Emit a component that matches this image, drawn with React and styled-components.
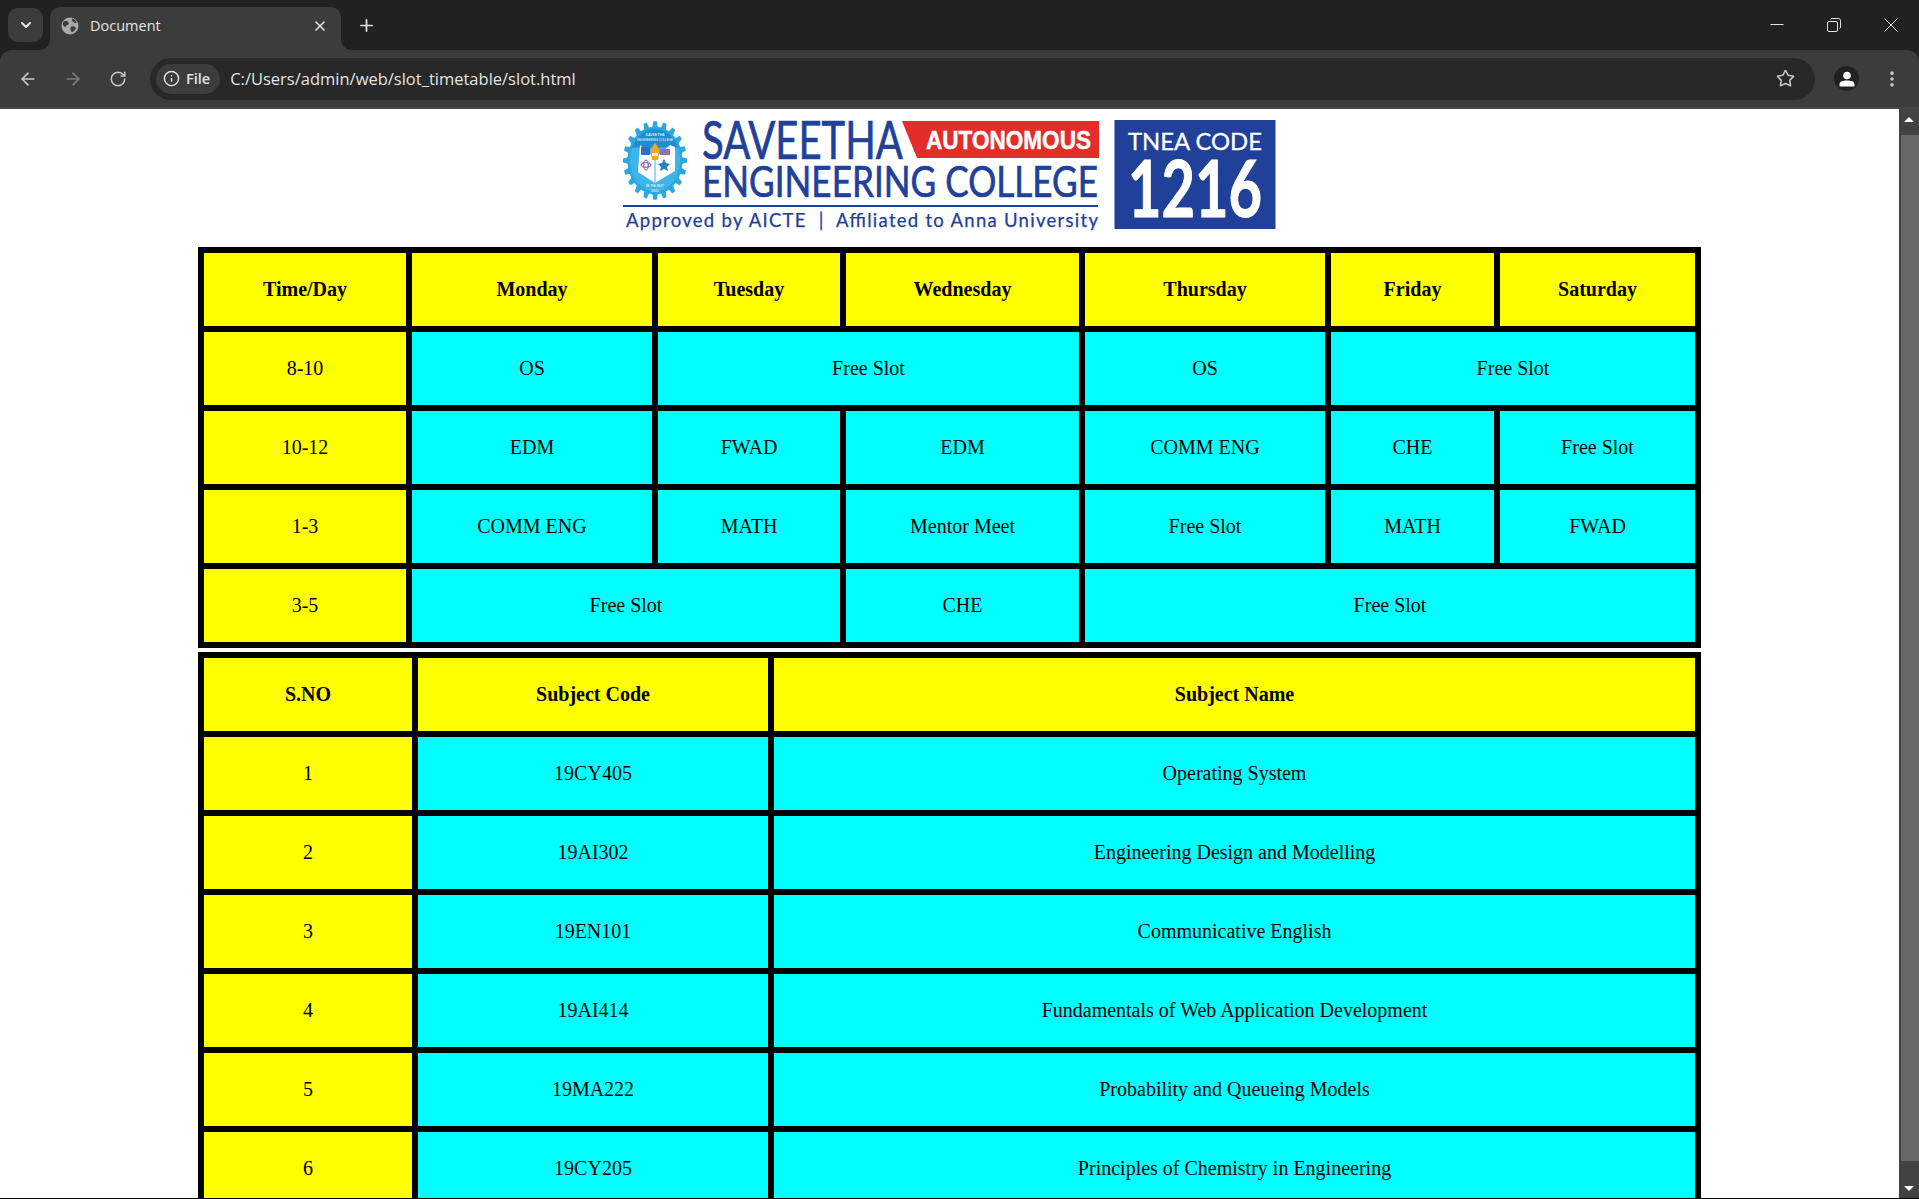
import React from 'react';
import styled, { createGlobalStyle } from 'styled-components';
import { ArrowLeft, ArrowRight, ChevronDown, EllipsisVertical, Info, Plus, RotateCw, Star, X } from 'lucide-react';

const GlobalStyle = createGlobalStyle`
  html, body {
    margin: 0;
    padding: 0;
    height: 100%;
    overflow: hidden;
    background: #202221;
  }
`;

const timetableCols = [202, 240, 182, 233, 240, 163, 195];
const timetable = [
  { head: true, cells: [['Time/Day'], ['Monday'], ['Tuesday'], ['Wednesday'], ['Thursday'], ['Friday'], ['Saturday']] },
  { cells: [['8-10'], ['OS'], ['Free Slot', 2], ['OS'], ['Free Slot', 2]] },
  { cells: [['10-12'], ['EDM'], ['FWAD'], ['EDM'], ['COMM ENG'], ['CHE'], ['Free Slot']] },
  { cells: [['1-3'], ['COMM ENG'], ['MATH'], ['Mentor Meet'], ['Free Slot'], ['MATH'], ['FWAD']] },
  { cells: [['3-5'], ['Free Slot', 2], ['CHE'], ['Free Slot', 3]] },
];

const subjectCols = [208, 350, 921];
const subjects = [
  ['1', '19CY405', 'Operating System'],
  ['2', '19AI302', 'Engineering Design and Modelling'],
  ['3', '19EN101', 'Communicative English'],
  ['4', '19AI414', 'Fundamentals of Web Application Development'],
  ['5', '19MA222', 'Probability and Queueing Models'],
  ['6', '19CY205', 'Principles of Chemistry in Engineering'],
];

// teeth of the college seal
const gearPoints = (cx, cy, outer, inner, teeth) => {
  const pts = [];
  const step = (Math.PI * 2) / teeth;
  for (let i = 0; i < teeth; i++) {
    const a = i * step - Math.PI / 2;
    const corners = [
      [inner, a - step * 0.3],
      [outer, a - step * 0.17],
      [outer, a + step * 0.17],
      [inner, a + step * 0.3],
    ];
    corners.forEach(([r, t]) => pts.push(`${(cx + r * Math.cos(t)).toFixed(1)},${(cy + r * Math.sin(t)).toFixed(1)}`));
  }
  return pts.join(' ');
};

const Logo = () => (
  <LogoSvg viewBox="609 109 681 138" role="img" aria-label="Saveetha Engineering College">
    {/* seal, the source image is stretched so it is taller than wide */}
    <g transform="translate(655 160.500) scale(1 1.230) translate(-655 -160.500)">
      <polygon points={gearPoints(655, 160.5, 32, 27.5, 20)} fill="#2aa9e0" />
      <circle cx="655" cy="160.5" r="25" fill="#3fb4e8" />
      <path d="M632 150a25 25 0 0 1 46 0z" fill="#1d8fd0" />
    </g>
    <path d="M640 145 L655 158 L670 145 L675 147 L675 171 L655 183 L638 172 Z" fill="#fff" />
    <path d="M655 158 L655 183" stroke="#3fb4e8" strokeWidth="1" />
    <rect x="641" y="147" width="9" height="8" rx="1" fill="#2f6fc0" />
    <rect x="660" y="149" width="10" height="6" fill="#8b6fb8" />
    <ellipse cx="646" cy="165" rx="5" ry="2.2" fill="none" stroke="#7a4fa3" strokeWidth="1" />
    <ellipse cx="646" cy="165" rx="2.2" ry="5" fill="none" stroke="#7a4fa3" strokeWidth="1" />
    <polygon points="664,159 666,163 670,164 667,167 668,171 664,169 660,171 661,167 658,164 662,163" fill="#2a7fc6" />
    <path d="M655 143 C652 147 650 150 651 153 L652 160 L658 160 L659 153 C660 150 658 147 655 143Z" fill="#f3a61f" />
    <rect x="652" y="153" width="6" height="3" fill="#fff" />
    <SealText x="655" y="135.5" textLength="19" lengthAdjust="spacingAndGlyphs" $size={3.6}>SAVEETHA</SealText>
    <SealText x="655" y="141" textLength="36" lengthAdjust="spacingAndGlyphs" $size={2.8}>ENGINEERING COLLEGE</SealText>
    <SealText x="655" y="187" textLength="18" lengthAdjust="spacingAndGlyphs" $size={3.4}>BE THE BEST</SealText>
    <SealText x="655" y="192" textLength="8" lengthAdjust="spacingAndGlyphs" $size={3.4}>2001</SealText>

    {/* name */}
    <polygon points="902,121 1099,121 1099,158 917,158" fill="#e32d2b" />
    <LogoText x="702" y="158.5" textLength="201" lengthAdjust="spacingAndGlyphs" $size={52} $fill="#21409a" $heavy={0.7}>SAVEETHA</LogoText>
    <LogoText x="926" y="149" textLength="165" lengthAdjust="spacingAndGlyphs" $size={26} $weight={700} $fill="#fff" $heavy={0.5} $font="'Liberation Sans'">AUTONOMOUS</LogoText>
    <LogoText x="702" y="197" textLength="396" lengthAdjust="spacingAndGlyphs" $size={43} $fill="#21409a" $heavy={0.7}>ENGINEERING COLLEGE</LogoText>
    <rect x="623" y="205" width="475" height="2" fill="#21409a" />
    <LogoText x="626" y="227" textLength="472" lengthAdjust="spacing" $size={18.5} $fill="#21409a" $heavy={0.25}>Approved by AICTE  |  Affiliated to Anna University</LogoText>

    {/* counselling code */}
    <rect x="1114.5" y="120" width="161" height="109" fill="#21409a" />
    <LogoText x="1128" y="150" textLength="134" lengthAdjust="spacingAndGlyphs" $size={24} $fill="#fff" $heavy={0.3}>TNEA CODE</LogoText>
    <LogoText x="1128" y="217" textLength="134" lengthAdjust="spacingAndGlyphs" $size={79} $weight={700} $fill="#fff" $heavy={1}>1216</LogoText>
  </LogoSvg>
);

const Colgroup = ({ widths }) => (
  <colgroup>
    {widths.map((w, i) => <col key={i} width={w} />)}
  </colgroup>
);

const App = () => (
  <Window>
    <GlobalStyle />
    <TabStrip>
      <TabSwitcher><ChevronDown size={16} strokeWidth={3} /></TabSwitcher>
      <Tab>
        <svg width="18" height="18" viewBox="0 0 18 18">
          <circle cx="9" cy="9" r="8.5" fill="#a9abab" />
          <path d="M3 4.5c2-.8 3.5-.3 4.5 1s-.3 2.500-1.500 2.800-1 2-2.300 1.500S.5 6 3 4.500zM11 1.500c2 .5 4 2 4.800 4.500-1.300.2-2.800-.3-3.800-1.300s-1.500-2-1-3.200zM10.500 9.500c1.500-.5 3.500 0 4.300 1.300.2 1.500-2 3.700-3.800 4.400-1.500-1-2.500-4.700-.5-5.700z" fill="#3c3c3c" />
        </svg>
        <TabTitle>Document</TabTitle>
        <TabClose><X size={16} strokeWidth={2.4} /></TabClose>
      </Tab>
      <NewTab><Plus size={19} strokeWidth={2.2} /></NewTab>
      <WindowControls>
        <WinButton>
          <svg width="14" height="14" viewBox="0 0 14 14"><path d="M0.500 6.500h13" stroke="#e3e3e3" fill="none" /></svg>
        </WinButton>
        <WinButton>
          <svg width="14" height="14" viewBox="0 0 14 14" fill="none" stroke="#e3e3e3">
            <rect x="0.500" y="3.500" width="10" height="10" rx="1.500" />
            <path d="M3.500 1.500 Q3.800 0.500 5 0.500 H11.500 Q13.500 0.500 13.500 2.500 V9 Q13.500 10.200 12.500 10.500" />
          </svg>
        </WinButton>
        <WinButton>
          <svg width="14" height="14" viewBox="0 0 14 14"><path d="M0.500 0.500l13 13M13.500 0.500l-13 13" stroke="#e3e3e3" fill="none" /></svg>
        </WinButton>
      </WindowControls>
    </TabStrip>

    <Toolbar>
      <NavButton><ArrowLeft size={20} strokeWidth={2} /></NavButton>
      <NavButton $off><ArrowRight size={20} strokeWidth={2} /></NavButton>
      <NavButton><RotateCw size={18} strokeWidth={2} /></NavButton>
      <Omnibox>
        <SiteChip><Info size={17} strokeWidth={2} />File</SiteChip>
        <Url>C:/Users/admin/web/slot_timetable/slot.html</Url>
        <BookmarkStar><Star size={19} strokeWidth={2} /></BookmarkStar>
      </Omnibox>
      <Avatar>
        <svg width="16" height="16" viewBox="0 0 16 16" fill="#fff">
          <circle cx="8" cy="4.500" r="3.800" />
          <path d="M0.500 15.500 V13 C0.500 10.500 4 9.500 8 9.500 S15.500 10.500 15.500 13 V15.500Z" />
        </svg>
      </Avatar>
      <MenuButton><EllipsisVertical size={20} strokeWidth={2.4} /></MenuButton>
    </Toolbar>

    <Viewport>
      <Page>
        <Header><Logo /></Header>
        <Grid>
          <Colgroup widths={timetableCols} />
          <tbody>
            {timetable.map((row, r) => (
              <tr key={r}>
                {row.cells.map(([text, span], c) => (
                  <Cell key={c} as={row.head ? 'th' : 'td'} colSpan={span} $yellow={row.head || c === 0}>{text}</Cell>
                ))}
              </tr>
            ))}
          </tbody>
        </Grid>
        <Grid>
          <Colgroup widths={subjectCols} />
          <tbody>
            <tr>
              <Cell as="th" $yellow>S.NO</Cell>
              <Cell as="th" $yellow>Subject Code</Cell>
              <Cell as="th" $yellow>Subject Name</Cell>
            </tr>
            {subjects.map(([no, code, name]) => (
              <tr key={no}>
                <Cell $yellow>{no}</Cell>
                <Cell>{code}</Cell>
                <Cell>{name}</Cell>
              </tr>
            ))}
          </tbody>
        </Grid>
      </Page>
      <Scrollbar>
        <ScrollArrow />
        <ScrollThumb />
        <ScrollArrow $down />
      </Scrollbar>
    </Viewport>
  </Window>
);

const Window = styled.div`
  display: flex;
  flex-direction: column;
  height: 100vh;
  overflow: hidden;
  background: #202221;
  font-family: 'Open Sans', 'Liberation Sans', sans-serif;
`;

const TabStrip = styled.div`
  display: flex;
  align-items: flex-end;
  flex: 0 0 50px;
  padding-left: 8px;
  background: #202221;
`;

const TabSwitcher = styled.div`
  display: flex;
  align-items: center;
  justify-content: center;
  width: 35px;
  height: 34px;
  margin-bottom: 8px;
  border-radius: 10px;
  background: #3c3c3c;
  color: #e3e3e3;
`;

const Tab = styled.div`
  position: relative;
  display: flex;
  align-items: center;
  width: 291px;
  height: 43px;
  margin-left: 7px;
  padding: 0 13px 6px 11px;
  box-sizing: border-box;
  border-radius: 10px 10px 0 0;
  background: #3c3c3c;
  color: #e3e3e3;

  &::before,
  &::after {
    content: '';
    position: absolute;
    bottom: 0;
    width: 10px;
    height: 10px;
  }

  &::before {
    left: -10px;
    background: radial-gradient(circle at 0 0, transparent 9.5px, #3c3c3c 10px);
  }

  &::after {
    right: -10px;
    background: radial-gradient(circle at 100% 0, transparent 9.5px, #3c3c3c 10px);
  }
`;

const TabTitle = styled.span`
  flex: 1;
  margin-left: 11px;
  font-size: 14.5px;
  color: #e3e3e3;
`;

const TabClose = styled.span`
  display: flex;
  color: #e3e3e3;
`;

const NewTab = styled.div`
  display: flex;
  margin: 0 0 15px 16px;
  color: #e3e3e3;
`;

const WindowControls = styled.div`
  display: flex;
  margin-left: auto;
  align-self: flex-start;
  padding: 18px 21px 0 0;
  gap: 43px;
`;

const WinButton = styled.div`
  display: flex;
  width: 14px;
  height: 14px;
`;

const Toolbar = styled.div`
  display: flex;
  align-items: center;
  flex: 0 0 57px;
  padding-left: 18px;
  border-bottom: 2px solid #464646;
  border-radius: 12px 12px 0 0;
  background: #3c3c3c;
`;

const NavButton = styled.div`
  display: flex;
  justify-content: center;
  width: 20px;
  margin-right: 25px;
  color: ${(p) => (p.$off ? '#7b7b7b' : '#c7c7c7')};
`;

const Omnibox = styled.div`
  display: flex;
  align-items: center;
  width: 1665px;
  height: 42px;
  margin-left: -3px;
  padding: 0 20px 0 6px;
  box-sizing: border-box;
  border-radius: 21px;
  background: #282828;
`;

const SiteChip = styled.div`
  display: flex;
  align-items: center;
  gap: 6px;
  height: 30px;
  padding: 0 10px 0 7px;
  border-radius: 15px;
  background: #3c3c3c;
  color: #e3e3e3;
  font-size: 14.5px;
  font-weight: 600;
`;

const Url = styled.div`
  flex: 1;
  margin-left: 10px;
  font-size: 16.5px;
  color: #e3e3e3;
`;

const BookmarkStar = styled.div`
  display: flex;
  color: #c7c7c7;
`;

const Avatar = styled.div`
  display: flex;
  align-items: center;
  justify-content: center;
  width: 25px;
  height: 25px;
  margin-left: 19px;
  border-radius: 50%;
  background: #202221;
  overflow: hidden;
`;

const MenuButton = styled.div`
  display: flex;
  margin-left: 23px;
  color: #c7c7c7;
`;

const Viewport = styled.div`
  display: flex;
  flex: 1;
  min-height: 0;
  border-bottom: 1px solid #000;
`;

const Page = styled.main`
  flex: 1;
  min-width: 0;
  overflow: hidden;
  background: #fff;
`;

const Header = styled.header`
  display: flex;
  justify-content: center;
  height: 138px;
`;

const LogoSvg = styled.svg`
  display: block;
  width: 681px;
  height: 138px;
`;

const LogoText = styled.text`
  font-family: ${(p) => p.$font || 'Lato'}, 'Liberation Sans', sans-serif;
  font-size: ${(p) => p.$size}px;
  font-weight: ${(p) => p.$weight || 400};
  fill: ${(p) => p.$fill};
  stroke: ${(p) => p.$fill};
  stroke-width: ${(p) => p.$heavy || 0}px;
  white-space: pre;
`;

const SealText = styled.text`
  font-family: 'Liberation Sans', sans-serif;
  font-size: ${(p) => p.$size}px;
  fill: #fff;
  text-anchor: middle;
`;

const Grid = styled.table`
  width: 1503px;
  margin: 0 auto 4px;
  table-layout: fixed;
  border-collapse: separate;
  border-spacing: 6px;
  background: #000;
`;

const Cell = styled.td`
  height: 73px;
  padding: 0;
  text-align: center;
  vertical-align: middle;
  background: ${(p) => (p.$yellow ? '#ffff00' : '#00ffff')};
  color: #000;
  font-family: 'Liberation Serif', 'Times New Roman', serif;
  font-size: 20px;
`;

const Scrollbar = styled.div`
  display: flex;
  flex-direction: column;
  flex: 0 0 20px;
  background: #424242;
`;

const ScrollArrow = styled.div`
  flex: 0 0 auto;
  width: 0;
  height: 0;
  margin: ${(p) => (p.$down ? '25px 0 7px 5px' : '8px 0 0 5px')};
  border-left: 5px solid transparent;
  border-right: 5px solid transparent;
  ${(p) => (p.$down ? 'border-top: 5px solid #fff;' : 'border-bottom: 5px solid #fff;')}
`;

const ScrollThumb = styled.div`
  flex: 1;
  margin: 13px 0 0 2px;
  background: #686868;
`;

export default App;
